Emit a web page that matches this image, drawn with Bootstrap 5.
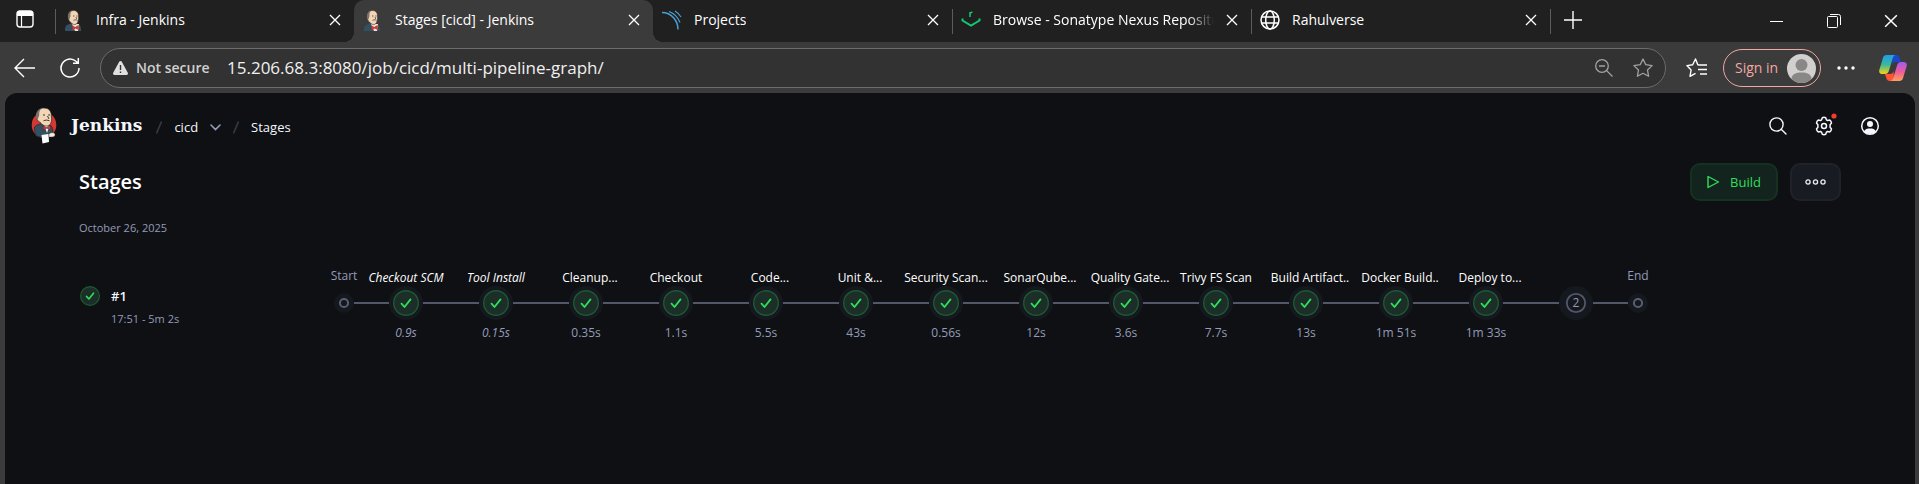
<!DOCTYPE html>
<html lang="en" data-bs-theme="dark">
<head>
<meta charset="utf-8">
<meta name="viewport" content="width=device-width, initial-scale=1">
<title>Stages [cicd] - Jenkins</title>
<link href="https://cdn.jsdelivr.net/npm/bootstrap@5.3.0/dist/css/bootstrap.min.css" rel="stylesheet">
<style>
  body { font-family: "Open Sans", "Noto Sans", sans-serif; background: #3b3b3b; color: #fff; font-size: 12px; line-height: 16px; }
  svg { display: block; flex: none; }
  a { color: inherit; text-decoration: none; }
  .ico { background: none; border: 0; padding: 0; color: inherit; display: flex; align-items: center; justify-content: center; }

  /* browser tabs */
  .tabstrip { background: #202020; height: 42px; font-size: 14px; }
  .strip-start { width: 55px; padding-left: 16px; }
  .tab { position: relative; flex: 0 1 299px; min-width: 0; height: 42px; padding: 0 13px 2px 9px; gap: 12px; }
  .tab-link { min-width: 0; gap: 12px; }
  .tab-title { overflow: hidden; white-space: nowrap; line-height: 24px; }
  .tab-title.fade-end { -webkit-mask-image: linear-gradient(to right, #000 88%, transparent); mask-image: linear-gradient(to right, #000 88%, transparent); }
  .tab.sep::before { content: ""; position: absolute; left: 0; top: 9px; width: 1px; height: 25px; background: #5c5c5c; }
  .tab.current { background: #3b3b3b; border-radius: 10px 10px 0 0; }
  .tab.current::before, .tab.current::after { content: ""; position: absolute; bottom: 0; width: 10px; height: 10px; }
  .tab.current::before { left: -10px; background: radial-gradient(circle at 0 0, transparent 10px, #3b3b3b 10px); }
  .tab.current::after { right: -10px; background: radial-gradient(circle at 100% 0, transparent 10px, #3b3b3b 10px); }
  .newtab { position: relative; width: 46px; padding-bottom: 2px; }
  .newtab::before { content: ""; position: absolute; left: 0; top: 9px; width: 1px; height: 25px; background: #5c5c5c; }
  .win { width: 57px; }

  /* address bar */
  .toolbar { height: 51px; padding: 6px 12px 5px 14px; }
  .omnibox { height: 40px; background: #323232; border: 1px solid #6c6c6c; border-radius: 20px; padding: 0 12px; margin-left: 19px; color: #dcdcdc; }
  .omnibox input { background: none; border: 0; outline: 0; padding: 0; color: #f0f0f0; font-size: 17px; line-height: 24px; min-width: 0; }
  .notsecure { font-size: 14px; font-weight: 600; color: #d0d0d0; width: 75px; white-space: nowrap; }
  .signin { height: 38px; width: 98px; border: 1px solid #f0a8a4; border-radius: 19px; color: #f0a8a4; background: none; font-size: 14px; padding: 0 4px 0 11px; white-space: nowrap; }

  /* Jenkins page */
  .page { background: #0f1014; margin: 0 4px 0 5px; border-radius: 12px 12px 0 0; min-height: calc(100vh - 93px); }
  .topbar { padding: 14px 35px 0 26px; height: 66px; }
  .brandname { font: bold 17px/24px "DejaVu Serif", serif; color: #f4f7fd; margin-left: 14px; padding-bottom: 2px; }
  .crumb { font-size: 13px; color: #f4f7fd; gap: 12px; margin-left: 14px; }
  .slash { width: 6px; height: 13px; color: #363944; }
  .tools { gap: 26px; padding-top: 9px; }
  .content { padding: 4px 74px 0 74px; }
  .actions { gap: 12px; }
  .title { font-size: 20px; line-height: 28px; font-weight: 600; margin: 0; }
  .pill { height: 38px; border-radius: 10px; border: 2px solid; font-size: 13px; display: flex; align-items: center; justify-content: center; }
  .build { width: 88px; color: #30de5b; background: #13241e; border-color: #15311f; gap: 10px; }
  .more { width: 51px; color: #e8ecf6; background: #191b23; border-color: #202229; }
  .dim { color: #949bb8; }
  .date { font-size: 11px; margin-top: 19px; }
  .run { margin-top: 31px; }
  .runinfo { width: 248px; padding: 19px 0 0 1px; gap: 11px; }
  .runinfo .num { font-size: 13px; line-height: 20px; font-weight: 600; color: #f4f7fd; }
  .runinfo .when { font-size: 11px; margin-top: 5px; }
  .stage { width: 90px; white-space: nowrap; text-align: center; color: #fff; }
  .stage.edge { width: 34px; }
  .name { height: 19px; padding-top: 3px; }
  .cut .name { padding-left: 8px; }
  .edge .name { display: flex; justify-content: center; padding-top: 1px; color: #949bb8; }
  .row-node { height: 34px; display: flex; align-items: center; }
  .row-node::before, .row-node::after { content: ""; flex: 1; height: 2px; background: #535768; }
  .first .row-node::before, .last .row-node::after { background: none; }
  .dur { color: #949bb8; margin-top: 5px; }
</style>
</head>
<body>

<svg width="0" height="0" class="position-absolute" aria-hidden="true">
  <symbol id="x" viewBox="0 0 12 12"><path d="M1 1l10 10M11 1L1 11" stroke="currentColor" stroke-width="1.3" fill="none"/></symbol>
  <symbol id="globe" viewBox="0 0 20 20"><g fill="none" stroke="currentColor" stroke-width="1.5"><circle cx="10" cy="10" r="9"/><ellipse cx="10" cy="10" rx="4.3" ry="9"/><path d="M2 7h16M2 13h16"/></g></symbol>
  <symbol id="ok" viewBox="0 0 34 34"><circle cx="17" cy="17" r="17" fill="#15181e"/><circle cx="17" cy="17" r="12.3" fill="#1b2e27" stroke="#1e5a33" stroke-width="1.4"/><path d="M12.5 17.6l3 3.4 6-7.6" fill="none" stroke="#30de5b" stroke-width="1.8" stroke-linecap="round" stroke-linejoin="round"/></symbol>
  <symbol id="dot" viewBox="0 0 20 20"><circle cx="10" cy="10" r="10" fill="#15181e"/><circle cx="10" cy="10" r="4.1" fill="none" stroke="#5a5f72" stroke-width="2"/></symbol>
  <symbol id="butler" viewBox="0 0 20 21">
    <path d="M1 21c-.2-3.500.5-5.500 2.500-6.300L8 13l7 1.500c1.500.8 2 3 2 6.500z" fill="#335061"/>
    <path d="M8 14l3 7h3l1-7z" fill="#e9e4dc"/>
    <path d="M4.500 5C4.800 1.800 7 .5 9.500.5c3.500 0 5.200 2.500 5 6 .3 3-.3 6-2.300 7.700-2 .8-4.600 0-5.700-2.200C4.500 11 4 8 4.500 5z" fill="#f0d6b7" stroke="#3a2d26" stroke-width=".6"/>
    <path d="M4.300 9C3 5 4.800 1 8 .7 6.500 2 6.300 4 6.500 6L5.400 9.500z" fill="#7d7068"/>
    <path d="M9 6h1.500M12.300 6h1.300M9.500 10.300c1.500-.7 3-.6 4 .1M12 7l.8 2" stroke="#4b3a30" stroke-width=".8" fill="none"/>
    <path d="M8.500 15.500l2.800 1.600 3.200-2 .4 5-3.300-1.600-3 1.800z" fill="#d33833"/>
  </symbol>
</svg>

<header class="tabstrip d-flex">
  <div class="strip-start d-flex align-items-center pb-1">
    <button class="ico" aria-label="Tab actions"><svg width="18" height="18" viewBox="0 0 18 18"><rect x="1" y="1" width="16" height="16" rx="3" fill="none" stroke="#fff" stroke-width="1.4"/><path d="M1 6V4a3 3 0 013-3h10a3 3 0 013 3v2z" fill="#fff"/><path d="M5.500 6v11" stroke="#fff" stroke-width="1.200"/></svg></button>
  </div>
  <div class="tab sep d-flex align-items-center justify-content-between">
    <a href="#" class="tab-link d-flex align-items-center"><svg width="20" height="21"><use href="#butler"/></svg><span class="tab-title">Infra - Jenkins</span></a>
    <button class="ico" aria-label="Close tab"><svg width="12" height="12"><use href="#x"/></svg></button>
  </div>
  <div class="tab current d-flex align-items-center justify-content-between">
    <a href="#" class="tab-link d-flex align-items-center"><svg width="20" height="21"><use href="#butler"/></svg><span class="tab-title">Stages [cicd] - Jenkins</span></a>
    <button class="ico" aria-label="Close tab"><svg width="12" height="12"><use href="#x"/></svg></button>
  </div>
  <div class="tab d-flex align-items-center justify-content-between">
    <a href="#" class="tab-link d-flex align-items-center"><svg width="20" height="20" viewBox="0 0 20 20" fill="none" stroke="#4b9fd5"><path d="M0 2.500C9 2.500 16 10 16 19.500" stroke-width="1.500"/><path d="M7 1.500c5 1.800 9 6 11 11" stroke-width="1.300"/><path d="M13 1c2.500 1.500 4.500 3.600 6 6" stroke-width="1.100"/></svg><span class="tab-title">Projects</span></a>
    <button class="ico" aria-label="Close tab"><svg width="12" height="12"><use href="#x"/></svg></button>
  </div>
  <div class="tab sep d-flex align-items-center justify-content-between">
    <a href="#" class="tab-link d-flex align-items-center"><svg width="20" height="20" viewBox="0 0 20 20" fill="none" stroke="#0ecb6e" stroke-width="2"><path d="M1.500 8.500v2L10 15.500l8.500-5v-2" /><path d="M9 7V2M9 4C9.300 2.500 10 2 11.500 2.200" stroke-width="1.500"/></svg><span class="tab-title fade-end">Browse - Sonatype Nexus Repository</span></a>
    <button class="ico" aria-label="Close tab"><svg width="12" height="12"><use href="#x"/></svg></button>
  </div>
  <div class="tab sep d-flex align-items-center justify-content-between">
    <a href="#" class="tab-link d-flex align-items-center"><svg width="20" height="20"><use href="#globe"/></svg><span class="tab-title">Rahulverse</span></a>
    <button class="ico" aria-label="Close tab"><svg width="12" height="12"><use href="#x"/></svg></button>
  </div>
  <button class="ico newtab" aria-label="New tab"><svg width="18" height="18" viewBox="0 0 18 18"><path d="M9 0v18M0 9h18" stroke="#fff" stroke-width="1.400"/></svg></button>
  <div class="d-flex ms-auto">
    <button class="ico win" aria-label="Minimize"><svg width="13" height="13" viewBox="0 0 13 13"><path d="M0 6.500h13" stroke="#fff"/></svg></button>
    <button class="ico win" aria-label="Restore"><svg width="14" height="14" viewBox="0 0 14 14" fill="none" stroke="#fff"><rect x=".5" y="2.500" width="10" height="11" rx="1"/><path d="M3 .5h8.500a2 2 0 012 2V11"/></svg></button>
    <button class="ico win" aria-label="Close window"><svg width="14" height="14"><use href="#x"/></svg></button>
  </div>
</header>

<nav class="toolbar d-flex align-items-center" aria-label="Browser toolbar">
  <button class="ico" aria-label="Back"><svg width="21" height="20" viewBox="0 0 21 20" fill="none" stroke="#fff" stroke-width="1.400"><path d="M21 10H1.500M10 1L1 10l9 9"/></svg></button>
  <button class="ico ms-4" aria-label="Reload"><svg width="22" height="22" viewBox="0 0 22 22" fill="none" stroke="#fff" stroke-width="1.500"><path d="M20 11a9 9 0 11-3-6.700L19 6M19.300 1v5.300H14"/></svg></button>
  <div class="omnibox flex-fill d-flex align-items-center">
    <svg width="15" height="14" viewBox="0 0 15 14"><path d="M7.500 0c.6 0 1 .3 1.300.8l6 11c.5 1-.1 2.200-1.300 2.200h-12C.3 14-.3 12.800.2 11.800l6-11C6.500.3 6.900 0 7.500 0z" fill="#e0e0e0"/><path d="M7.500 4v5M7.500 10.500v1.500" stroke="#323232" stroke-width="1.400"/></svg>
    <span class="notsecure ms-2">Not secure</span>
    <input class="flex-fill ms-3" type="text" aria-label="Address" value="15.206.68.3:8080/job/cicd/multi-pipeline-graph/">
    <button class="ico" aria-label="Zoom"><svg width="18" height="18" viewBox="0 0 18 18" fill="none" stroke="#a2a2a2" stroke-width="1.300"><circle cx="7" cy="7" r="6.300"/><path d="M11.600 11.600L17.500 17.500M4 7h6"/></svg></button>
    <button class="ico ms-3 ps-1" aria-label="Add to favorites"><svg width="20" height="20" viewBox="0 0 20 20" fill="none" stroke="#a2a2a2" stroke-width="1.300" stroke-linejoin="round"><path d="M10 1l2.800 5.700 6.300.9-4.600 4.400 1.100 6.300L10 15.300l-5.600 3 1.100-6.300L.9 7.600l6.300-.9z"/></svg></button>
  </div>
  <button class="ico ms-3 ps-1" aria-label="Favorites"><svg width="21" height="20" viewBox="0 0 21 20" fill="none" stroke="#fff" stroke-width="1.400" stroke-linejoin="round"><path d="M13 7l-1.200-.2L9.500 1 6.700 6.700.9 7.600 5.100 12 4 18.300l5.500-3M13 7h8M12 11.500h9M14 16h7"/></svg></button>
  <button class="signin d-flex align-items-center justify-content-between ms-3"><span>Sign in</span>
    <svg width="29" height="29" viewBox="0 0 29 29"><circle cx="14.500" cy="14.500" r="14.500" fill="#d2d0ce"/><circle cx="14.500" cy="11" r="6" fill="#8a8886"/><path d="M4.500 25c0-5 4.500-6.500 10-6.500s10 1.500 10 6.500a14.500 14.500 0 01-20 0z" fill="#8a8886"/></svg></button>
  <button class="ico ms-3" aria-label="Settings and more"><svg width="18" height="4" viewBox="0 0 18 4" fill="#fff"><circle cx="2" cy="2" r="1.700"/><circle cx="9" cy="2" r="1.700"/><circle cx="16" cy="2" r="1.700"/></svg></button>
  <button class="ico ms-4" aria-label="Copilot"><svg width="28" height="26" viewBox="0 0 28 26">
    <defs>
      <linearGradient id="ca" x1="0" y1="0" x2="0" y2="1"><stop offset="0" stop-color="#1e9df0"/><stop offset=".5" stop-color="#3bb89a"/><stop offset="1" stop-color="#f5d313"/></linearGradient>
      <linearGradient id="cb" x1="0" y1="0" x2="0" y2="1"><stop offset="0" stop-color="#a05cf0"/><stop offset=".5" stop-color="#ee5a9d"/><stop offset="1" stop-color="#ffa257"/></linearGradient>
    </defs>
    <path d="M13 0h4.500c1.500 0 2.500 1 3 2.500L22 7h-5c-2 0-3 1-3.500 3z" fill="#1848c8"/>
    <path d="M15 26h-4.500c-1.500 0-2.500-1-3-2.500L6 19h5c2 0 3-1 3.500-3z" fill="#ff5436"/>
    <path d="M7.500 0H17c-2 0-2.700 1.500-3.200 3l-4 13c-.6 2-1.800 3-3.800 3H3.500C1 19-.3 17.500.3 15L4 2.800C4.600 1 5.700 0 7.500 0z" fill="url(#ca)"/>
    <path d="M20.500 26H11c2 0 2.700-1.500 3.200-3l4-13c.6-2 1.800-3 3.800-3h2.500c2.500 0 3.800 1.500 3.200 4L24 23.200c-.6 1.800-1.700 2.800-3.500 2.800z" fill="url(#cb)"/>
  </svg></button>
</nav>

<div class="page">
  <div class="topbar d-flex align-items-start">
    <a href="#" class="d-flex align-items-center">
      <svg width="26" height="37" viewBox="0 0 26 37">
        <ellipse cx="13" cy="18" rx="12.300" ry="13" fill="#d33833"/>
        <path d="M3.500 20c1.500-2 4-2.500 6-3l9 1c2.500.5 3 3 3.500 6l-1.500 5.500L13 31l-8-2c-1-3-1.800-6-1.500-9z" fill="#335061" stroke="#14202a" stroke-width=".6"/>
        <path d="M13 18l3 8 2.500-7z" fill="#f1f1f1"/>
        <path d="M5.500 8C6 3.500 9 1 13 1c5 0 7.500 3.500 7.300 8 .8 4 .2 7.500-2.300 9.500-3 1.500-7-.2-8.500-3C6 14 5.200 11 5.500 8z" fill="#f0d6b7" stroke="#2c221c" stroke-width=".7"/>
        <path d="M5.300 12C4 7 6 2.500 10.500 1.500 8.300 3.500 8 6 8.200 8.500L6.800 12z" fill="#7a706c"/>
        <path d="M12 8h2M17 8h2M12.500 13.800c2-1 4-.8 6 0M16.500 9l1.500 3" stroke="#47362c" stroke-width="1" fill="none"/>
        <path d="M12 19l3.500 1.600 4-2.100.4 4.300-4.200-1.600-3.400 1.900z" fill="#d33833" stroke="#5c1513" stroke-width=".4"/>
        <path d="M10.500 28l7-1 .5 8-6.500 1.500z" fill="#fff"/>
        <path d="M18 27c2-2 5-1.500 6 0 .5 2-1 3-3 3h-3z" fill="#f6ead9" stroke="#333" stroke-width=".4"/>
      </svg>
      <span class="brandname">Jenkins</span>
    </a>
    <ol class="list-unstyled d-flex align-items-center mb-0 crumb pt-2 mt-1">
      <li><svg class="slash" viewBox="0 0 6 13"><path d="M5.500.5l-5 12" stroke="currentColor" stroke-width="1.600"/></svg></li>
      <li><a href="#">cicd</a></li>
      <li><button class="ico dim" aria-label="cicd menu"><svg width="11" height="7" viewBox="0 0 11 7"><path d="M1 1l4.500 4.500L10 1" fill="none" stroke="currentColor" stroke-width="1.600" stroke-linecap="round"/></svg></button></li>
      <li><svg class="slash" viewBox="0 0 6 13"><path d="M5.500.5l-5 12" stroke="currentColor" stroke-width="1.600"/></svg></li>
      <li><a href="#">Stages</a></li>
    </ol>
    <div class="tools d-flex ms-auto">
      <button class="ico" aria-label="Search"><svg width="20" height="18" viewBox="0 0 20 18" fill="none" stroke="#f4f7fd" stroke-width="1.400"><circle cx="8.500" cy="7.500" r="6.600"/><path d="M13.200 12.200l4.800 4.800" stroke-linecap="round"/></svg></button>
      <button class="ico position-relative" aria-label="Manage Jenkins"><svg width="20" height="20" viewBox="0 0 20 20" fill="none" stroke="#f4f7fd" stroke-width="1.500" stroke-linejoin="round"><path d="M8.300 1.700Q10 1 11.700 1.700L12.400 3.800 13.600 4.500 15.800 4.100Q17.300 5.200 17.500 7L16.100 8.800V11.200L17.500 13Q17.300 14.800 15.800 15.900L13.600 15.500 12.400 16.200 11.700 18.300Q10 19 8.300 18.300L7.600 16.200 6.400 15.500 4.200 15.900Q2.700 14.800 2.500 13L3.900 11.200V8.800L2.500 7Q2.700 5.200 4.200 4.100L6.400 4.500 7.600 3.800z"/><circle cx="10" cy="10" r="2.500"/></svg>
        <svg class="position-absolute top-0 start-100 translate-middle" width="6" height="6"><circle cx="3" cy="3" r="2.600" fill="#f5392f"/></svg></button>
      <button class="ico" aria-label="Account"><svg width="20" height="20" viewBox="0 0 20 20"><circle cx="10" cy="10" r="8.300" fill="none" stroke="#f4f7fd" stroke-width="1.500"/><circle cx="10" cy="8" r="3" fill="#f4f7fd"/><path d="M4 15.500c1-2.500 3.500-3 6-3s5 .5 6 3a8.300 8.300 0 01-12 0z" fill="#f4f7fd"/></svg></button>
    </div>
  </div>

  <main class="content">
    <div class="d-flex align-items-center justify-content-between">
      <h1 class="title">Stages</h1>
      <div class="actions d-flex">
        <button class="pill build p-0"><svg width="13" height="14" viewBox="0 0 13 14"><path d="M1 1.500v11l10.500-5.500z" fill="none" stroke="currentColor" stroke-width="1.400" stroke-linejoin="round"/></svg>Build</button>
        <button class="pill more p-0" aria-label="More actions"><svg width="21" height="6" viewBox="0 0 21 6" fill="none" stroke="currentColor" stroke-width="1.300"><circle cx="3" cy="3" r="2.100"/><circle cx="10.500" cy="3" r="2.100"/><circle cx="18" cy="3" r="2.100"/></svg></button>
      </div>
    </div>
    <div class="date dim">October 26, 2025</div>

    <div class="run d-flex">
      <div class="runinfo d-flex flex-shrink-0">
        <svg width="20" height="20" viewBox="0 0 20 20"><circle cx="10" cy="10" r="9.400" fill="#1b2e27" stroke="#1e5a33" stroke-width="1.200"/><path d="M6.500 10.400l2.400 2.600 4.600-5.800" fill="none" stroke="#30de5b" stroke-width="1.600" stroke-linecap="round" stroke-linejoin="round"/></svg>
        <div><a href="#" class="num d-block">#1</a><div class="when dim">17:51 - 5m 2s</div></div>
      </div>
      <div class="d-flex">
        <div class="stage edge first"><div class="name">Start</div><div class="row-node"><svg width="20" height="20"><use href="#dot"/></svg></div></div>
        <div class="stage fst-italic"><div class="name">Checkout SCM</div><div class="row-node"><svg width="34" height="34"><use href="#ok"/></svg></div><div class="dur">0.9s</div></div>
        <div class="stage fst-italic"><div class="name">Tool Install</div><div class="row-node"><svg width="34" height="34"><use href="#ok"/></svg></div><div class="dur">0.15s</div></div>
        <div class="stage cut"><div class="name">Cleanup...</div><div class="row-node"><svg width="34" height="34"><use href="#ok"/></svg></div><div class="dur">0.35s</div></div>
        <div class="stage"><div class="name">Checkout</div><div class="row-node"><svg width="34" height="34"><use href="#ok"/></svg></div><div class="dur">1.1s</div></div>
        <div class="stage cut"><div class="name">Code...</div><div class="row-node"><svg width="34" height="34"><use href="#ok"/></svg></div><div class="dur">5.5s</div></div>
        <div class="stage cut"><div class="name">Unit &amp;...</div><div class="row-node"><svg width="34" height="34"><use href="#ok"/></svg></div><div class="dur">43s</div></div>
        <div class="stage"><div class="name">Security Scan...</div><div class="row-node"><svg width="34" height="34"><use href="#ok"/></svg></div><div class="dur">0.56s</div></div>
        <div class="stage cut"><div class="name">SonarQube...</div><div class="row-node"><svg width="34" height="34"><use href="#ok"/></svg></div><div class="dur">12s</div></div>
        <div class="stage cut"><div class="name">Quality Gate...</div><div class="row-node"><svg width="34" height="34"><use href="#ok"/></svg></div><div class="dur">3.6s</div></div>
        <div class="stage"><div class="name">Trivy FS Scan</div><div class="row-node"><svg width="34" height="34"><use href="#ok"/></svg></div><div class="dur">7.7s</div></div>
        <div class="stage cut"><div class="name">Build Artifact..</div><div class="row-node"><svg width="34" height="34"><use href="#ok"/></svg></div><div class="dur">13s</div></div>
        <div class="stage cut"><div class="name">Docker Build..</div><div class="row-node"><svg width="34" height="34"><use href="#ok"/></svg></div><div class="dur">1m 51s</div></div>
        <div class="stage cut"><div class="name">Deploy to...</div><div class="row-node"><svg width="34" height="34"><use href="#ok"/></svg></div><div class="dur">1m 33s</div></div>
        <div class="stage"><div class="name"></div><div class="row-node"><svg width="34" height="34" viewBox="0 0 34 34"><circle cx="17" cy="17" r="17" fill="#15181e"/><circle cx="17" cy="17" r="9.200" fill="none" stroke="#535768" stroke-width="1.800"/><text x="17" y="21" text-anchor="middle" font-size="12" fill="#949bb8">2</text></svg></div></div>
        <div class="stage edge last"><div class="name">End</div><div class="row-node"><svg width="20" height="20"><use href="#dot"/></svg></div></div>
      </div>
    </div>
  </main>
</div>

<script src="https://cdn.jsdelivr.net/npm/bootstrap@5.3.0/dist/js/bootstrap.bundle.min.js"></script>
</body>
</html>
